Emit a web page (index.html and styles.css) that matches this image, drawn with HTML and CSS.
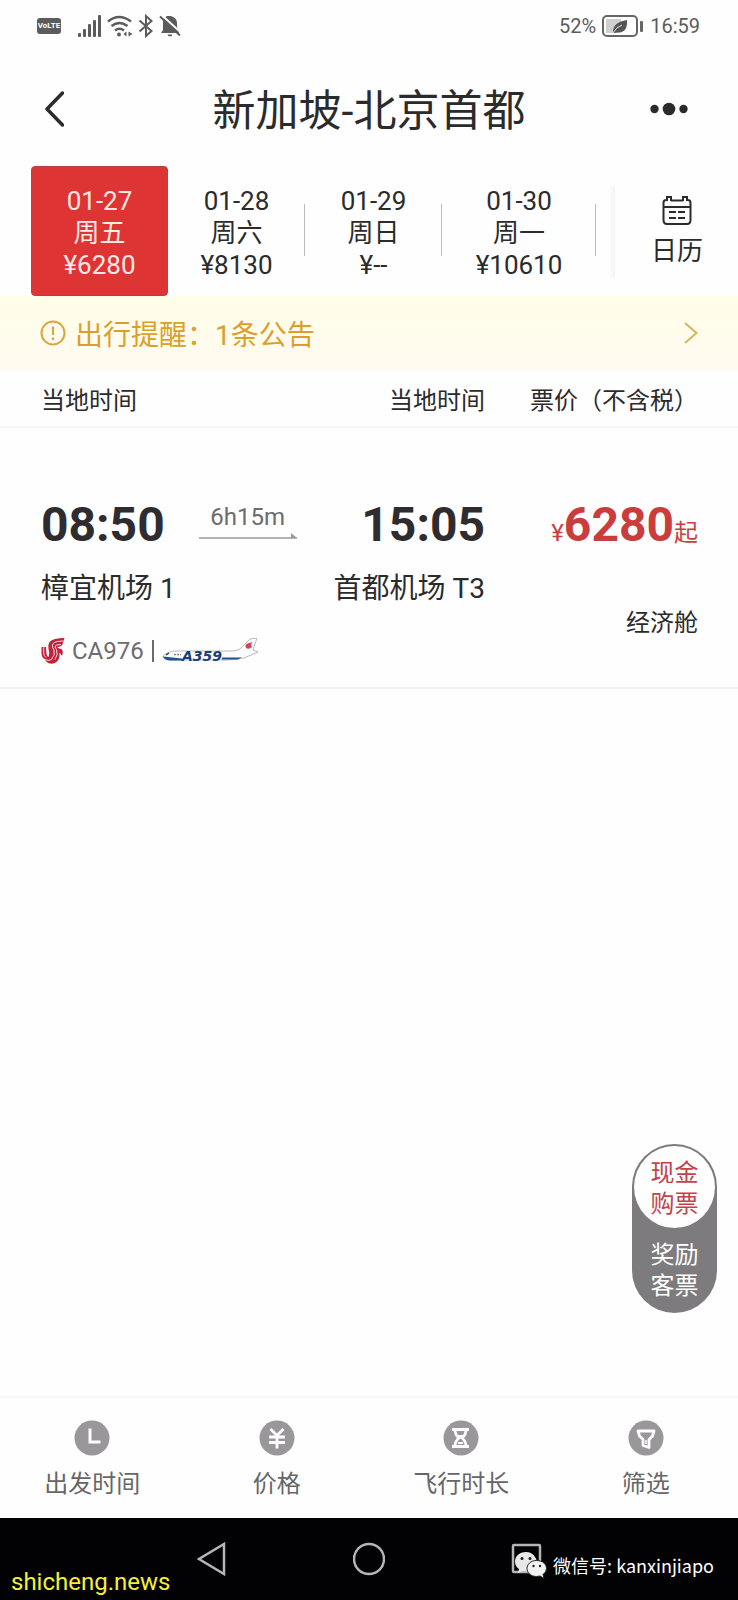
FILE: index.html
```html
<!DOCTYPE html>
<html lang="zh-CN">
<head>
  <meta charset="UTF-8" />
  <meta name="viewport" content="width=device-width, initial-scale=1.0" />
  <title>新加坡-北京首都</title>
  <link rel="stylesheet" href="styles.css">
</head>
<body>
  <div class="status">
    <div class="status-left">
      <span class="volte">VoLTE</span>
      <svg class="signal" width="24" height="22" viewBox="0 0 24 22" fill="#5c5c5c">
        <rect x="0" y="18" width="3" height="4" rx="1"/><rect x="5" y="14" width="3" height="8" rx="1"/><rect x="10" y="9" width="3" height="13" rx="1"/><rect x="15" y="5" width="3" height="17" rx="1"/><rect x="20" y="0" width="3" height="22" rx="1"/>
      </svg>
      <svg class="wifi" width="26" height="22" viewBox="0 0 26 22" fill="none" stroke="#5c5c5c" stroke-width="2.6">
        <path d="M1 6.500Q12 -2.500 24 6.500M4.500 11Q12.500 5 20.500 11M8 15.500Q12.500 12 17 15.500"/>
        <circle cx="12" cy="19.500" r="2" fill="#5c5c5c" stroke="none"/>
        <path d="M16.500 19l3-2.500v5zM25.500 19l-4-2.500v5z" fill="#5c5c5c" stroke="none"/>
      </svg>
      <svg class="bt" width="16" height="24" viewBox="0 0 16 24" fill="none" stroke="#5c5c5c" stroke-width="2">
        <path d="M1.500 6.500L13.500 17L8 22V2L13.500 7L1.500 17.500"/>
      </svg>
      <svg width="22" height="22" viewBox="0 0 22 22" fill="#5c5c5c">
        <path d="M8 1h4q6 2 6 7v4l2 4v2H2l2-3V8q0-5 4-7zM8.500 19.500h5q-.5 2-2.500 2t-2.500-2z"/>
        <path d="M2 -0.500L22.500 18" stroke="#fefefe" stroke-width="2"/>
        <path d="M1 1.500L21 20.500" stroke="#5c5c5c" stroke-width="2"/>
      </svg>
    </div>
    <div class="status-right">
      <span>52%</span>
      <svg width="42" height="22" viewBox="0 0 42 22">
        <rect x="4" y="4" width="15" height="14" fill="#cfcfcf"/>
        <rect x="1" y="1" width="34" height="20" rx="4" fill="none" stroke="#666" stroke-width="2"/>
        <rect x="38" y="6" width="3" height="11" rx="1" fill="#666"/>
        <path d="M11 17Q11 7 25 5Q26 18 15 17.500L12 18z" fill="#555"/>
        <path d="M11 18Q14 12 20 10" fill="none" stroke="#ddd" stroke-width="1"/>
      </svg>
      <span>16:59</span>
    </div>
  </div>

  <header class="topbar">
    <button class="icon-btn" aria-label="返回">
      <svg width="20" height="36" viewBox="0 0 20 36" fill="none" stroke="#2b2b2b" stroke-width="3.500" stroke-linecap="round" stroke-linejoin="round"><path d="M18.500 2L3 18L18.500 34"/></svg>
    </button>
    <h1>新加坡-北京首都</h1>
    <button class="icon-btn" aria-label="更多">
      <svg width="38" height="14" viewBox="0 0 38 14" fill="#2b2b2b"><circle cx="4.500" cy="7" r="4.200"/><circle cx="19" cy="7" r="6.300"/><circle cx="33.500" cy="7" r="4.200"/></svg>
    </button>
  </header>

  <nav class="dates">
    <button class="date active"><span>01-27</span><span>周五</span><span>¥6280</span></button>
    <button class="date"><span>01-28</span><span>周六</span><span>¥8130</span></button>
    <button class="date"><span>01-29</span><span>周日</span><span>¥--</span></button>
    <button class="date wide"><span>01-30</span><span>周一</span><span>¥10610</span></button>
    <button class="calendar">
      <svg width="30" height="30" viewBox="0 0 30 30" fill="none" stroke="#2b2b2b" stroke-width="2">
        <path d="M5 4H4Q1.500 4 1.500 7V24Q1.500 28 5 28H25Q28.500 28 28.500 24V7Q28.500 4 26 4H25M9 4.500H21M1.500 11H28.500M5 5V1H9V5M21 5V1H25V5"/>
        <path d="M7 16h7M16 16h7M7 22h7M16 22h7"/>
      </svg>
      <span>日历</span>
    </button>
  </nav>

  <a class="notice" href="#">
    <svg width="26" height="26" viewBox="0 0 26 26" fill="none" stroke="#dda43c" stroke-width="2"><circle cx="13" cy="13" r="11.500"/><path d="M13 6.500V15M13 17.500V20"/></svg>
    <span class="notice-text">出行提醒：1条公告</span>
    <svg width="14" height="22" viewBox="0 0 14 22" fill="none" stroke="#d6b558" stroke-width="2"><path d="M1 1L12.500 11L1 21"/></svg>
  </a>

  <main>
    <div class="row head">
      <div class="trip"><span>当地时间</span><span>当地时间</span></div>
      <span>票价（不含税）</span>
    </div>

    <article class="row flight">
      <div>
        <div class="trip">
          <strong class="time">08:50</strong>
          <span class="duration">6h15m
            <svg width="98" height="6" viewBox="0 0 98 6"><path d="M0 5H98" stroke="#999" stroke-width="1.500"/><path d="M92 0L98 5H92z" fill="#999"/></svg>
          </span>
          <strong class="time arrive">15:05</strong>
        </div>
        <div class="trip airports"><span>樟宜机场 1</span><span>首都机场 T3</span></div>
        <div class="plane">
          <svg class="logo" width="24" height="28" viewBox="0 0 24 28">
            <path d="M23.500 1Q12 1 8.500 5Q6.500 8 7.500 12Q9 16 7.500 20Q5 19.500 5 10H0.500V17Q1 21.500 5 22.500L4.500 24Q8 28 14 26Q18.500 23.500 18.500 18L18.500 15.500L21 19Q23 13 20 12Q16 11 16.500 10Q21 10 22 6Z" fill="#c2213a"/>
            <path d="M22.500 4Q12 4 11.500 8Q11 11 13 13Q14.500 18 10.500 22.500Q8 24 5 23M20 7.500Q14.500 7.500 14 9.500Q14 11 15.500 12.500Q17.500 17.500 14 22.500M2.700 10V16Q3 19 5 20.500" fill="none" stroke="#fbdfe3" stroke-width="1"/>
          </svg>
          <span class="number">CA976</span>
          <span class="bar"></span>
          <svg class="aircraft" width="98" height="26" viewBox="0 0 98 26">
            <path d="M1 18Q6 13 14 13H68Q77 13 80 9L88 1L95 0L91 12L96 14L82 20L66 22H9Q1 22 1 18z" fill="#fcfcfc" stroke="#aaa" stroke-width=".8"/>
            <path d="M1 18.500L20 20.500V22.500H8Q2 22 1 18.500zM60 19.500H80L76 21.500H60z" fill="#1d5590"/>
            <path d="M4 17L7 15" stroke="#333" stroke-width="1.500"/>
            <path d="M12 16.500H19" stroke="#888" stroke-width="1.500" stroke-dasharray="2 1"/>
            <path d="M84 10Q82 6 87 5L91 4Q88 6 90 9Q87 12 84 10z" fill="#cf4858"/>
            <text class="model" x="20" y="23">A359</text>
          </svg>
        </div>
      </div>
      <div class="fare">
        <div class="price">¥<strong>6280</strong>起</div>
        <div class="cabin">经济舱</div>
      </div>
    </article>
  </main>

  <footer>
    <div class="switch">
      <button class="on">现金<br>购票</button>
      <button>奖励<br>客票</button>
    </div>

    <nav class="tabs">
      <button>
        <svg width="36" height="36" viewBox="0 0 36 36"><circle cx="18" cy="18" r="17.500" fill="#9a979a"/><path d="M16 8.500V22H26.500" fill="none" stroke="#fff" stroke-width="3"/></svg>
        <span>出发时间</span>
      </button>
      <button>
        <svg width="36" height="36" viewBox="0 0 36 36"><circle cx="18" cy="18" r="17.500" fill="#9a979a"/><path d="M11.500 9L18 15.500L24.500 9M10 17H26M10 22.500H26M18 15V28.500" fill="none" stroke="#fff" stroke-width="2.800"/></svg>
        <span>价格</span>
      </button>
      <button>
        <svg width="36" height="36" viewBox="0 0 36 36"><circle cx="18" cy="18" r="17.500" fill="#9a979a"/><path d="M9 9.500H26M9 26.500H26M12 9.500Q12 15 16 18Q12 21 12 26.500M23 9.500Q23 15 19 18Q23 21 23 26.500" fill="none" stroke="#fff" stroke-width="2.800"/><path d="M15 16H20M15 23H20" stroke="#fff" stroke-width="2"/></svg>
        <span>飞行时长</span>
      </button>
      <button>
        <svg width="36" height="36" viewBox="0 0 36 36"><circle cx="18" cy="18" r="17.500" fill="#9a979a"/><path d="M10 11H26L24.500 16L21 19.500V27.500L15 25.500V19.500L11.500 16Z" fill="none" stroke="#fff" stroke-width="2.800" stroke-linejoin="round"/><path d="M18 20V24" stroke="#fff" stroke-width="1.500"/></svg>
        <span>筛选</span>
      </button>
    </nav>

    <div class="navbar">
      <button aria-label="后退"><svg width="32" height="34" viewBox="0 0 32 34"><path d="M29 2V32L4 17Z"/></svg></button>
      <button aria-label="主页"><svg width="32" height="34" viewBox="0 0 32 34"><circle cx="16" cy="17" r="15"/></svg></button>
      <button aria-label="最近任务"><svg width="32" height="34" viewBox="0 0 32 34"><rect x="2" y="3" width="27" height="27" rx="1"/></svg></button>
      <span class="site">shicheng.news</span>
      <span class="wechat">
        <svg width="32" height="27" viewBox="0 0 32 27">
          <path d="M11 0C4 0 0 4.500 0 9.500Q0 14 4 17L3 21L8 19Q17 20.500 21 14Q23 9 20 5Q17 0 11 0z" fill="#e8e8e8"/>
          <path d="M21.500 8.500C15.500 8.500 12 12.500 12 16.500S15.500 24.500 21.500 24.500L25 24L29 26.500L28 22.500Q31.500 20 31.500 16.500C31.500 12.500 28 8.500 21.500 8.500z" fill="#f2f2f2" stroke="#222"/>
          <g fill="#222"><circle cx="7" cy="6.500" r="1.500"/><circle cx="15" cy="6.500" r="1.500"/><circle cx="18.500" cy="14" r="1.200"/><circle cx="25" cy="14" r="1.200"/></g>
        </svg>
        微信号: kanxinjiapo
      </span>
    </div>
  </footer>
</body>
</html>
```

FILE: styles.css
```css
* {
  box-sizing: border-box;
}
body {
  margin: 0;
  min-height: 100vh;
  display: flex;
  flex-direction: column;
  background: #fefefe;
  color: #2b2b2b;
  font-family: Roboto, "Noto Sans CJK SC", sans-serif;
  font-size: 24px;
}
button {
  border: none;
  background: none;
  padding: 0;
  font: inherit;
  color: inherit;
  cursor: pointer;
}
svg {
  display: block;
  flex: none;
}

/* status bar */
.status {
  height: 52px;
  padding: 0 38px 0 37px;
  display: flex;
  align-items: center;
  justify-content: space-between;
}
.status-left {
  display: flex;
  align-items: center;
  gap: 5px;
}
.status-right {
  display: flex;
  align-items: center;
  gap: 6px;
  color: #5c5c5c;
  font-size: 20px;
}
.volte {
  width: 24px;
  height: 16px;
  margin-right: 12px;
  border-radius: 3px;
  background: #5c5c5c;
  color: #fff;
  font-size: 8px;
  font-weight: 700;
  line-height: 16px;
  text-align: center;
}

/* title */
.topbar {
  height: 114px;
  padding: 0 50px 0 44px;
  display: flex;
  align-items: center;
}
.topbar h1 {
  flex: 1;
  margin: 0;
  padding: 4px 0 0 6px;
  font-size: 43px;
  font-weight: 400;
  line-height: 60px;
  text-align: center;
}
.icon-btn {
  width: 38px;
}

/* date strip */
.dates {
  display: flex;
  height: 130px;
  padding-left: 31px;
}
.date {
  position: relative;
  width: 137px;
  padding-top: 4px;
  display: flex;
  flex-direction: column;
  align-items: center;
  justify-content: center;
  font-size: 26px;
  line-height: 32px;
}
.date.wide {
  width: 154px;
}
.date.active {
  background: #df3434;
  border: 1px solid #b04444;
  border-radius: 4px;
  color: #ffe9e4;
}
.date:not(.active)::after {
  content: "";
  position: absolute;
  right: 0;
  top: 38px;
  width: 1px;
  height: 52px;
  background: #bbb;
}
.calendar {
  flex: 1;
  margin: 20px 0 18px 12px;
  padding-left: 8px;
  display: flex;
  flex-direction: column;
  align-items: center;
  justify-content: center;
  gap: 8px;
  background: linear-gradient(to right, #fefefe, #f5f3f4 7px, #fefefe 7px);
  font-size: 26px;
  line-height: 34px;
}

/* notice */
.notice {
  display: flex;
  align-items: center;
  height: 74px;
  padding: 0 40px;
  background: linear-gradient(#fffee8, #fffaf0);
  color: #dd9f2c;
  font-size: 28px;
  text-decoration: none;
}
.notice-text {
  flex: 1;
  margin-left: 9px;
}

/* flights */
main {
  flex: 1;
}
.row {
  display: grid;
  grid-template-columns: 1fr 168px;
  column-gap: 45px;
  padding: 0 40px 0 41px;
}
.trip {
  display: flex;
  justify-content: space-between;
}
.head {
  height: 58px;
  align-items: center;
  border-bottom: 2px solid #f8f5f9;
  white-space: nowrap;
}
.flight {
  padding-top: 73px;
  padding-bottom: 22px;
  border-bottom: 2px solid #f4f3f4;
}
.time {
  font-size: 48px;
  line-height: 48px;
  color: #2f2c30;
}
.arrive {
  margin-left: auto;
}
.duration {
  margin-left: 34px;
  color: #6d6b6e;
  line-height: 32px;
  text-align: center;
}
.airports {
  margin-top: 22px;
  font-size: 28px;
  line-height: 36px;
}
.plane {
  display: flex;
  align-items: center;
  height: 28px;
  margin-top: 30px;
}
.number {
  margin-left: 7px;
  color: #6d6b6e;
}
.bar {
  width: 2px;
  height: 22px;
  margin: 0 8px;
  background: #6d6b6e;
}
.model {
  font: italic bold 14px "DejaVu Sans", sans-serif;
  fill: #173f77;
}
.fare {
  text-align: right;
}
.price {
  height: 48px;
  color: #c93d3d;
  line-height: 48px;
  white-space: nowrap;
}
.price strong {
  font-size: 48px;
}
.cabin {
  margin-top: 56px;
  line-height: 36px;
}

/* bottom */
footer {
  position: relative;
}
.switch {
  position: absolute;
  right: 21px;
  bottom: 287px;
  width: 85px;
  height: 169px;
  padding: 2px;
  border-radius: 43px;
  background: #7d7b7e;
  color: #fff;
  line-height: 31px;
}
.switch button {
  display: block;
  width: 100%;
  height: 82px;
  padding-top: 4px;
}
.switch .on {
  border-radius: 50%;
  background: #fefefe;
  color: #c5424b;
}
.tabs {
  display: flex;
  height: 122px;
  border-top: 2px solid #f9f6fa;
}
.tabs button {
  flex: 1;
  display: flex;
  flex-direction: column;
  align-items: center;
  padding-top: 22px;
  gap: 10px;
  color: #666;
  line-height: 36px;
}
.navbar {
  position: relative;
  display: flex;
  align-items: center;
  justify-content: center;
  gap: 126px;
  height: 82px;
  background: #020103;
}
.navbar button svg {
  fill: none;
  stroke: #b5b5b5;
  stroke-width: 2.5;
}
.site {
  position: absolute;
  left: 11px;
  bottom: 2px;
  color: #f3f03c;
  line-height: 32px;
}
.wechat {
  position: absolute;
  right: 24px;
  top: 33px;
  display: flex;
  align-items: center;
  gap: 6px;
  color: #fff;
  font-family: "Noto Sans CJK SC", sans-serif;
  font-size: 18px;
  line-height: 28px;
}
```
